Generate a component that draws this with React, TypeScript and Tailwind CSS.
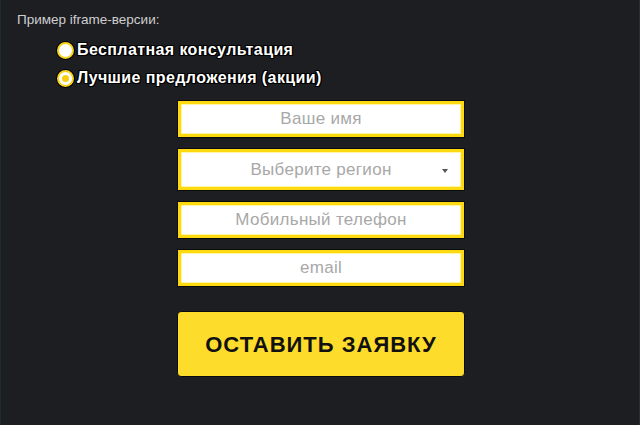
import { useState } from 'react';

export default function App() {
  const [choice, setChoice] = useState<'free' | 'best'>('best');

  const outline = {
    textShadow:
      '-1px -1px 0 #000, 1px -1px 0 #000, -1px 1px 0 #000, 1px 1px 0 #000, 0 1px 0 #000, 0 -1px 0 #000, 1px 0 0 #000, -1px 0 0 #000',
  };

  return (
    <div className="w-[640px] h-[425px] bg-[#1d1e22] font-['Liberation_Sans',Arial,sans-serif] border-l border-l-[#1f2a33] border-r border-r-[#2c2d31]">
      <div className="pt-[10px] pl-[16px] text-[13.5px] text-[#cfcfcf]">Пример iframe-версии:</div>

      {/* Radio group */}
      <div className="mt-[10px] pl-[56px] flex flex-col gap-[8px]">
        <Radio checked={choice === 'free'} onClick={() => setChoice('free')}>
          <span style={outline}>Бесплатная консультация</span>
        </Radio>
        <Radio checked={choice === 'best'} onClick={() => setChoice('best')}>
          <span style={outline}>Лучшие предложения (акции)</span>
        </Radio>
      </div>

      {/* Form */}
      <div className="mt-[12px] ml-[176px] w-[288px] flex flex-col">
        <Field placeholder="Ваше имя" />
        <div className="mt-[10px] h-[43px] border border-[#0c0c0e] bg-[#ffd90f] p-[3px]">
          <div className="h-full bg-white border border-[#fff3a6] flex items-center relative">
            <span className="flex-1 text-center text-[17px] text-[#a8a8a8] tracking-[0.3px]">Выберите регион</span>
            <span className="absolute right-[12px] top-[16px] w-0 h-0 border-l-[3px] border-r-[3px] border-t-[4px] border-l-transparent border-r-transparent border-t-[#555]" />
          </div>
        </div>
        <div className="mt-[10px]">
          <Field placeholder="Мобильный телефон" />
        </div>
        <div className="mt-[10px]">
          <Field placeholder="email" />
        </div>
        <button className="mt-[24px] h-[66px] rounded-[4px] border border-[#0c0c0e] bg-[#fedc2b] text-[#111] text-[22px] font-bold tracking-[1px] flex items-center justify-center">
          ОСТАВИТЬ ЗАЯВКУ
        </button>
      </div>
    </div>
  );
}

function Field({ placeholder }: { placeholder: string }) {
  return (
    <div className="h-[38px] border border-[#0c0c0e] bg-[#ffd90f] p-[3px]">
      <input
        placeholder={placeholder}
        className="w-full h-full bg-white border border-[#fff3a6] text-center text-[17px] tracking-[0.3px] outline-none placeholder:text-[#a8a8a8]"
      />
    </div>
  );
}

function Radio({ checked, onClick, children }: { checked: boolean; onClick: () => void; children: React.ReactNode }) {
  return (
    <div className="flex items-center cursor-pointer h-[20px]" onClick={onClick}>
      <span className="w-[17px] h-[17px] rounded-full bg-white border-2 border-[#f7d31b] flex items-center justify-center shadow-[0_0_0_1px_#000]">
        {checked && <span className="w-[7px] h-[7px] rounded-full bg-[#f7cf10]" />}
      </span>
      <span className="ml-[3px] text-[16px] font-bold text-white tracking-[0.4px]">{children}</span>
    </div>
  );
}
